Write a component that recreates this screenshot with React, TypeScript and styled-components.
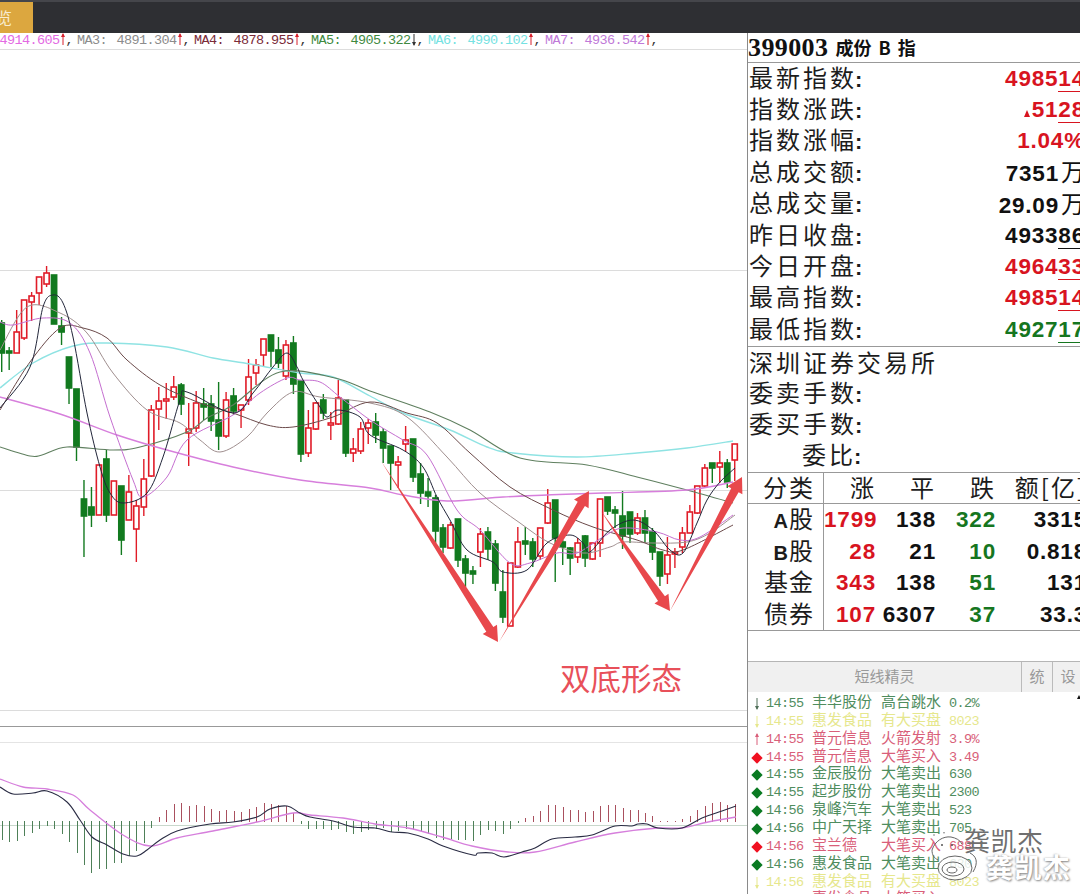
import React from "react";
import styled, { createGlobalStyle } from "styled-components";

const GlobalStyle = createGlobalStyle`
    html, body {
        margin: 0;
        padding: 0;
        background: #fff;
    }
`;

const CJK = `"Noto Sans CJK SC", sans-serif`;
const NUM = `"Liberation Sans", "Noto Sans CJK SC", sans-serif`;
const MONO = `"Liberation Mono", monospace`;

const Page = styled.div`
    width: 1080px;
    height: 894px;
    overflow: hidden;
    position: relative;
    display: flex;
    flex-direction: column;
    background: #fff;
`;

const TopBar = styled.header`
    height: 33px;
    flex: none;
    box-sizing: border-box;
    background: #2e2f33;
    border-top: 2px solid #45464b;
`;

const TabButton = styled.div`
    width: 33px;
    height: 31px;
    overflow: hidden;
    background: #dca73f;
    color: #f8ecd0;
    font: 16px/31px ${CJK};
    text-indent: -4px;
`;

const Body = styled.div`
    flex: 1;
    display: flex;
    min-height: 0;
`;

const LeftPane = styled.main`
    width: 747px;
    flex: none;
    display: flex;
    flex-direction: column;
    overflow: hidden;
`;

const Legend = styled.div`
    height: 16px;
    flex: none;
    margin-left: -40px;
    border-bottom: 1px solid #ddd;
    display: grid;
    grid-template-columns: repeat(6, 117px);
    font: 13.5px/16px ${MONO};
    letter-spacing: -0.6px;
    white-space: pre;
`;

const LegendItem = styled.span<{ $color: string }>`
    color: ${(p) => p.$color};
`;

const LegendValue = styled.span`
    margin-left: 2px;
`;

const Comma = styled.span`
    color: #333;
`;

const ChartArea = styled.div`
    position: relative;
    height: 660px;
    flex: none;
`;

const ChartSvg = styled.svg`
    display: block;
    width: 747px;
    height: 100%;
`;

const Annotation = styled.span`
    position: absolute;
    left: 560px;
    top: 607px;
    font: 30.5px/40px ${CJK};
    color: #e8505a;
`;

const Rule = styled.div<{ $color: string; $gap: number }>`
    flex: none;
    height: 1px;
    margin-top: ${(p) => p.$gap}px;
    background: ${(p) => p.$color};
`;

const MacdSvg = styled.svg`
    display: block;
    width: 747px;
    flex: 1;
    min-height: 0;
`;

const RightPane = styled.aside`
    flex: 1;
    min-width: 0;
    border-left: 1px solid #8a8a8a;
    overflow: hidden;
    display: flex;
    flex-direction: column;
`;

const Inner = styled.div`
    width: 338px;
    flex: 1;
    display: flex;
    flex-direction: column;
`;

const TitleRow = styled.div`
    height: 29px;
    flex: none;
    display: flex;
    align-items: center;
    gap: 7px;
    border-bottom: 1px solid #999;
    color: #111;
`;

const Code = styled.span`
    font: bold 26px/29px "Liberation Serif", serif;
    letter-spacing: 0.4px;
`;

const CodeName = styled.span`
    font: bold 18px/29px ${CJK};
    word-spacing: 3px;
    white-space: pre;
`;

const Block = styled.section<{ $line?: boolean }>`
    flex: none;
    border-bottom: ${(p) => (p.$line ? "1px solid #999" : "none")};
`;

const Row = styled.div`
    height: 31.4px;
    display: flex;
    justify-content: space-between;
    align-items: center;
    padding-right: 1px;
`;

const Label = styled.span<{ $indent?: number }>`
    font: 24px/28px ${CJK};
    letter-spacing: 3px;
    color: #1c1c1c;
    margin-left: ${(p) => p.$indent ?? 1}px;
    padding-bottom: 1px;
    white-space: nowrap;
`;

const Colon = styled.span`
    font: bold 22px/28px ${NUM};
    margin-left: -2px;
`;

const toneColor = { up: "#d8141f", down: "#16761f", flat: "#111" };

type Tone = keyof typeof toneColor;

const Value = styled.span<{ $tone: Tone }>`
    font: bold 22.5px/29px ${NUM};
    letter-spacing: 0.8px;
    padding-bottom: 1px;
    color: ${(p) => toneColor[p.$tone]};
    white-space: nowrap;
`;

const Decimal = styled.span`
    border-bottom: 1px solid currentColor;
`;

const Unit = styled.span`
    font: 24px/29px ${CJK};
    letter-spacing: 0;
    margin-left: 2px;
`;

const UpMark = styled.span`
    display: inline-block;
    width: 0;
    height: 0;
    margin-right: 2px;
    border-left: 3px solid transparent;
    border-right: 3px solid transparent;
    border-bottom: 7px solid #d8141f;
`;

const Table = styled.div`
    flex: none;
    border-bottom: 1px solid #999;
    display: grid;
    grid-template-columns: 76px 52px 60px 60px 91px;
    grid-auto-rows: 31.4px;
`;

const HeadCell = styled.div<{ $first?: boolean }>`
    font: 24px/28px ${CJK};
    color: #1c1c1c;
    text-align: right;
    white-space: nowrap;
    border-bottom: 1px solid #999;
    box-sizing: border-box;
    letter-spacing: 2px;
    padding-right: ${(p) => (p.$first ? 8 : 0)}px;
    border-right: ${(p) => (p.$first ? "1px solid #999" : "none")};
`;

const NameCell = styled.div`
    font: 24px/28px ${CJK};
    color: #1c1c1c;
    text-align: right;
    padding-right: 9px;
    border-right: 1px solid #999;
    box-sizing: border-box;
    letter-spacing: 1px;
`;

const Latin = styled.span`
    font: bold 20px/28px ${NUM};
`;

const Cell = styled.div<{ $tone: Tone }>`
    font: bold 22.5px/31px ${NUM};
    letter-spacing: 0.8px;
    text-align: right;
    color: ${(p) => toneColor[p.$tone]};
    white-space: nowrap;
`;

const SpiritHeader = styled.div`
    flex: none;
    margin-top: 30px;
    height: 30px;
    display: flex;
    background: #f0f0f0;
    border-top: 1px solid #b5b5b5;
    color: #999;
    font: 15px/28px ${CJK};
`;

const SpiritTitle = styled.div`
    width: 273px;
    text-align: center;
`;

const SpiritTab = styled.div`
    width: 31px;
    text-align: center;
    border-left: 1px solid #bbb;
    box-sizing: border-box;
`;

const FeedList = styled.ul`
    position: relative;
    margin: -3px 0 0;
    padding: 0;
    list-style: none;
`;

const signalColor = { green: "#4f8d5e", red: "#d95f7a", yellow: "#e6e78d" };

type Signal = keyof typeof signalColor;

const FeedRow = styled.li<{ $signal: Signal }>`
    height: 17.87px;
    display: grid;
    grid-template-columns: 18px 46px 69px 68px auto;
    align-items: center;
    color: ${(p) => signalColor[p.$signal]};
    font: 15px/17.87px ${CJK};
    white-space: pre;
`;

const IconSlot = styled.span`
    display: flex;
    justify-content: center;
    align-items: center;
    margin-top: 6px;
`;

const Diamond = styled.span<{ $color: string }>`
    width: 8px;
    height: 8px;
    transform: rotate(45deg);
    background: ${(p) => p.$color};
`;

const Mono = styled.span`
    font: 13.5px/17.87px ${MONO};
    letter-spacing: -0.6px;
    margin-top: 6px;
`;

const ScrollArrow = styled.span`
    position: absolute;
    left: 329px;
    top: 6px;
    width: 0;
    height: 0;
    border-left: 2px solid transparent;
    border-right: 2px solid transparent;
    border-bottom: 4px solid #111;
`;

const WatermarkName = styled.span`
    position: absolute;
    left: 964px;
    top: 824px;
    font: 26px/32px ${CJK};
    letter-spacing: 0.5px;
    color: #6f6f6f;
`;

const WatermarkNameLight = styled.span`
    position: absolute;
    left: 986px;
    top: 849px;
    font: bold 27px/36px ${CJK};
    letter-spacing: 1.5px;
    color: #fff;
    text-shadow: 1px 1px 2px #8a8a8a, -1px 0 2px #bbb;
`;

const WatermarkLogo = styled.svg`
    position: absolute;
    left: 925px;
    top: 832px;
    width: 56px;
    height: 52px;
`;

type Candle = [number, number, number, number, "r" | "g"];

// high, body top, body bottom, low
const CANDLES: Candle[] = [
    [320, 323, 353, 372, "g"], [347, 351, 353, 370, "g"], [310, 332, 353, 353, "r"], [300, 300, 338, 340, "r"],
    [292, 296, 302, 321, "r"], [277, 277, 293, 305, "r"], [266, 273, 284, 287, "r"], [275, 275, 324, 324, "g"],
    [317, 326, 332, 345, "g"], [357, 357, 388, 404, "g"], [389, 389, 447, 461, "g"], [480, 499, 516, 557, "g"],
    [487, 507, 515, 527, "g"], [465, 465, 515, 515, "r"], [450, 459, 515, 522, "g"], [481, 481, 515, 515, "r"],
    [486, 486, 540, 555, "g"], [475, 492, 520, 520, "r"], [500, 506, 529, 562, "r"], [459, 479, 507, 516, "r"],
    [405, 410, 476, 477, "r"], [387, 401, 409, 430, "r"], [383, 399, 401, 419, "r"], [376, 387, 397, 400, "r"],
    [383, 385, 404, 415, "g"], [403, 429, 433, 466, "r"], [391, 403, 428, 432, "r"], [388, 404, 407, 420, "g"],
    [395, 404, 421, 431, "g"], [382, 420, 436, 450, "g"], [392, 400, 436, 438, "r"], [388, 396, 411, 415, "g"],
    [405, 405, 410, 428, "r"], [359, 377, 400, 405, "r"], [359, 365, 373, 385, "r"], [339, 339, 355, 367, "r"],
    [335, 335, 351, 367, "g"], [337, 350, 363, 368, "g"], [340, 345, 376, 380, "r"], [336, 343, 384, 394, "g"],
    [381, 381, 454, 462, "g"], [410, 428, 453, 457, "r"], [402, 403, 429, 430, "r"], [394, 400, 413, 419, "g"],
    [412, 423, 425, 440, "r"], [380, 398, 424, 425, "r"], [400, 400, 453, 457, "g"], [438, 449, 453, 462, "r"],
    [422, 429, 451, 454, "r"], [419, 423, 428, 444, "r"], [413, 422, 435, 443, "g"], [428, 432, 448, 463, "g"],
    [446, 446, 463, 490, "g"], [456, 462, 465, 488, "r"], [426, 440, 444, 452, "r"], [439, 439, 477, 482, "g"],
    [463, 474, 493, 504, "g"], [478, 492, 496, 507, "g"], [495, 498, 531, 543, "g"], [524, 528, 547, 553, "g"],
    [522, 525, 548, 549, "r"], [519, 519, 560, 567, "g"], [555, 559, 573, 587, "g"], [566, 571, 574, 584, "g"],
    [528, 534, 552, 567, "r"], [527, 532, 549, 560, "g"], [540, 544, 583, 591, "g"], [570, 592, 617, 623, "g"],
    [563, 563, 626, 626, "r"], [527, 542, 567, 568, "r"], [527, 541, 544, 555, "g"], [538, 542, 559, 567, "g"],
    [528, 528, 556, 560, "r"], [489, 503, 523, 524, "r"], [500, 500, 538, 582, "g"], [540, 542, 547, 565, "g"],
    [547, 548, 558, 575, "g"], [538, 543, 557, 563, "r"], [535, 536, 558, 567, "g"], [543, 543, 559, 560, "r"],
    [499, 499, 543, 557, "r"], [497, 497, 511, 515, "g"], [506, 510, 513, 528, "g"], [491, 516, 536, 549, "g"],
    [512, 512, 534, 543, "g"], [513, 518, 533, 535, "r"], [510, 518, 533, 543, "g"], [528, 532, 552, 560, "g"],
    [552, 552, 576, 586, "g"], [537, 555, 574, 584, "r"], [548, 552, 554, 568, "r"], [527, 533, 547, 553, "r"],
    [505, 512, 533, 533, "r"], [486, 486, 513, 514, "r"], [464, 468, 486, 487, "r"], [463, 463, 468, 483, "g"],
    [451, 463, 467, 483, "r"], [459, 463, 482, 488, "g"], [444, 444, 460, 481, "r"],
];

type Pt = [number, number];

const MA_LINES: { color: string; width: number; pts: Pt[] }[] = [
    {
        color: "#8fe3e3", width: 1.4,
        pts: [[0, 388], [33, 363], [73, 346], [107, 343], [167, 347], [213, 358], [250, 364], [300, 373], [333, 377], [370, 396], [403, 413], [450, 430], [487, 447], [513, 453], [577, 457], [637, 453], [687, 448], [733, 441]],
    },
    {
        color: "#5f7f5f", width: 1.1,
        pts: [[0, 447], [30, 456], [42, 455], [67, 447], [113, 450], [140, 447], [187, 432], [207, 418], [233, 405], [280, 372], [335, 378], [370, 391], [430, 412], [470, 430], [520, 458], [587, 465], [637, 477], [687, 490], [733, 503]],
    },
    {
        color: "#d77fdc", width: 1.4,
        pts: [[0, 397], [60, 414], [117, 435], [167, 450], [233, 467], [300, 480], [370, 488], [403, 495], [447, 501], [503, 497], [547, 495], [603, 493], [687, 490], [733, 482]],
    },
    {
        color: "#a08f8f", width: 1,
        pts: [[0, 350], [27, 307], [60, 313], [87, 333], [113, 373], [147, 410], [180, 423], [200, 440], [220, 452], [247, 437], [267, 413], [293, 392], [320, 397], [370, 403], [407, 417], [447, 457], [480, 493], [520, 523], [550, 543], [583, 553], [610, 547], [623, 542], [653, 543], [687, 542], [710, 533], [735, 515]],
    },
    {
        color: "#6b4a4a", width: 1,
        pts: [[0, 410], [30, 362], [60, 328], [83, 328], [107, 338], [127, 360], [160, 385], [200, 403], [233, 413], [267, 425], [293, 427], [333, 417], [370, 402], [407, 413], [437, 423], [470, 453], [510, 487], [553, 510], [593, 527], [637, 540], [663, 550], [683, 550], [733, 525]],
    },
    {
        color: "#c56fd0", width: 1,
        pts: [[0, 322], [13, 325], [43, 318], [70, 323], [90, 353], [110, 417], [133, 480], [143, 497], [167, 477], [187, 440], [233, 415], [260, 393], [287, 378], [300, 380], [320, 382], [340, 397], [370, 420], [403, 440], [427, 455], [457, 510], [480, 530], [510, 563], [530, 563], [557, 553], [577, 553], [603, 537], [623, 528], [657, 532], [680, 540], [700, 537], [733, 515]],
    },
    {
        color: "#22263a", width: 1,
        pts: [[0, 408], [30, 367], [43, 307], [53, 295], [63, 303], [73, 337], [87, 413], [100, 467], [110, 493], [123, 503], [147, 493], [163, 457], [180, 400], [187, 392], [233, 413], [253, 393], [273, 367], [287, 353], [297, 367], [303, 380], [320, 407], [327, 417], [338, 410], [360, 417], [370, 435], [403, 450], [423, 467], [437, 497], [450, 520], [467, 550], [493, 562], [503, 572], [527, 570], [547, 543], [570, 535], [583, 543], [590, 552], [610, 530], [633, 520], [653, 530], [670, 550], [683, 553], [697, 523], [707, 500], [720, 482], [735, 468]],
    },
];

// signed offsets: positive hangs down (green), negative rises up (red)
const MACD_BARS = [
    19, 21, 20, 15, 12, 8, 5, 8, 13, 21, 32, 44, 52, 48, 48, 42, 42, 35, 30, 22, 7,
    -5, -12, -18, -19, -16, -17, -16, -13, -11, -12, -11, -10, -13, -15, -19, -18, -17, -16, -9,
    3, 8, 8, 8, 9, 8, 11, 13, 11, 9,
    8, 7, 11, 10, 8, 9, 11, 13, 17, 19, 18, 19, 19, 20, 14, 9, 10, 13, 8, 2,
    -4, -6, -11, -17, -17, -15, -12, -12, -10, -11, -16, -17, -17, -14, -12, -12, -9, -6, -1, -1, -1,
    -3, -6, -12, -16, -19, -20, -17, -18,
];

const DIF: Pt[] = [[0, 787], [13, 794], [33, 793], [47, 791], [67, 802], [80, 820], [92, 837], [107, 845], [123, 854], [137, 856], [147, 850], [160, 840], [177, 831], [210, 824], [233, 822], [257, 817], [270, 809], [287, 806], [300, 813], [310, 817], [333, 821], [353, 827], [375, 828], [392, 832], [408, 833], [428, 839], [443, 846], [473, 855], [478, 853], [492, 853], [504, 857], [522, 852], [535, 848], [552, 839], [575, 837], [592, 835], [615, 826], [632, 826], [638, 824], [647, 824], [658, 828], [682, 828], [702, 818], [722, 811], [736, 806]];

const DEA: Pt[] = [[0, 779], [23, 787], [47, 789], [73, 795], [90, 810], [123, 835], [150, 846], [177, 838], [213, 831], [257, 822], [293, 813], [310, 815], [343, 818], [375, 824], [408, 828], [442, 837], [472, 846], [508, 852], [535, 852], [575, 842], [615, 833], [658, 828], [682, 828], [708, 822], [736, 817]];

const candleX = (i: number) => 1.7 + i * 7.48;

const smoothPath = (pts: Pt[]) => {
    let d = `M${pts[0][0]} ${pts[0][1]}`;
    for (let i = 0; i < pts.length - 1; i++) {
        const p0 = pts[Math.max(i - 1, 0)];
        const p1 = pts[i];
        const p2 = pts[i + 1];
        const p3 = pts[Math.min(i + 2, pts.length - 1)];
        const c1x = p1[0] + (p2[0] - p0[0]) / 6;
        const c1y = p1[1] + (p2[1] - p0[1]) / 6;
        const c2x = p2[0] - (p3[0] - p1[0]) / 6;
        const c2y = p2[1] - (p3[1] - p1[1]) / 6;
        d += ` C${c1x.toFixed(1)} ${c1y.toFixed(1)} ${c2x.toFixed(1)} ${c2y.toFixed(1)} ${p2[0]} ${p2[1]}`;
    }
    return d;
};

// hand-drawn style arrow: a hairline at the tail widening towards the head
const arrowPoints = (from: Pt, to: Pt) => {
    const dx = to[0] - from[0];
    const dy = to[1] - from[1];
    const len = Math.hypot(dx, dy);
    const ux = dx / len;
    const uy = dy / len;
    const nx = -uy;
    const ny = ux;
    const bx = to[0] - ux * 15;
    const by = to[1] - uy * 15;
    const pts: Pt[] = [
        [from[0], from[1]],
        [bx + nx * 4.2, by + ny * 4.2],
        [bx + nx * 8.5, by + ny * 8.5],
        [to[0], to[1]],
        [bx - nx * 8.5, by - ny * 8.5],
        [bx - nx * 4.2, by - ny * 4.2],
    ];
    return pts.map((p) => p.join(",")).join(" ");
};

const ARROWS: [Pt, Pt][] = [
    [[381, 461], [498, 642]],
    [[499, 642], [589, 491]],
    [[601, 511], [670, 611]],
    [[670, 611], [742, 477]],
];

const Tick = ({ up, color }: { up: boolean; color: string }) => (
    <svg width="6" height="13" viewBox="0 0 6 13" style={{ verticalAlign: "-2px" }}>
        <path d="M3 1V12" stroke={color} strokeWidth="1" />
        <path d={up ? "M3 0L5 4H1Z" : "M3 13L5 9H1Z"} fill={color} />
    </svg>
);

const MA_LEGEND = [
    { name: "MA2", value: "4914.605", color: "#e36ae3", up: true },
    { name: "MA3", value: "4891.304", color: "#8c8c8c", up: true },
    { name: "MA4", value: "4878.955", color: "#7a2a38", up: true },
    { name: "MA5", value: "4905.322", color: "#3f8a3f", up: false },
    { name: "MA6", value: "4990.102", color: "#74e2e2", up: true },
    { name: "MA7", value: "4936.542", color: "#c079d8", up: true },
];

const QUOTES: { label: string; node: React.ReactNode }[] = [
    { label: "最新指数", node: <Value $tone="up">4985<Decimal>14</Decimal></Value> },
    { label: "指数涨跌", node: <Value $tone="up"><UpMark />51<Decimal>28</Decimal></Value> },
    { label: "指数涨幅", node: <Value $tone="up">1.04%</Value> },
    { label: "总成交额", node: <Value $tone="flat">7351<Unit>万</Unit></Value> },
    { label: "总成交量", node: <Value $tone="flat">29.09<Unit>万</Unit></Value> },
    { label: "昨日收盘", node: <Value $tone="flat">4933<Decimal>86</Decimal></Value> },
    { label: "今日开盘", node: <Value $tone="up">4964<Decimal>33</Decimal></Value> },
    { label: "最高指数", node: <Value $tone="up">4985<Decimal>14</Decimal></Value> },
    { label: "最低指数", node: <Value $tone="down">4927<Decimal>17</Decimal></Value> },
];

const BREADTH = [
    { name: <><Latin>A</Latin>股</>, up: "1799", flat: "138", down: "322", amount: "3315" },
    { name: <><Latin>B</Latin>股</>, up: "28", flat: "21", down: "10", amount: "0.818" },
    { name: "基金", up: "343", flat: "138", down: "51", amount: "131" },
    { name: "债券", up: "107", flat: "6307", down: "37", amount: "33.3" },
];

type Feed = { mark: "down" | "up" | "diamond"; signal: Signal; time: string; name: string; event: string; value: string };

const FEED: Feed[] = [
    { mark: "down", signal: "green", time: "14:55", name: "丰华股份", event: "高台跳水", value: "0.2%" },
    { mark: "down", signal: "yellow", time: "14:55", name: "惠发食品", event: "有大买盘", value: "8023" },
    { mark: "up", signal: "red", time: "14:55", name: "普元信息", event: "火箭发射", value: "3.9%" },
    { mark: "diamond", signal: "red", time: "14:55", name: "普元信息", event: "大笔买入", value: "3.49" },
    { mark: "diamond", signal: "green", time: "14:55", name: "金辰股份", event: "大笔卖出", value: "630" },
    { mark: "diamond", signal: "green", time: "14:55", name: "起步股份", event: "大笔卖出", value: "2300" },
    { mark: "diamond", signal: "green", time: "14:56", name: "泉峰汽车", event: "大笔卖出", value: "523" },
    { mark: "diamond", signal: "green", time: "14:56", name: "中广天择", event: "大笔卖出", value: "705" },
    { mark: "diamond", signal: "red", time: "14:56", name: "宝兰德", event: "大笔买入", value: "688" },
    { mark: "diamond", signal: "green", time: "14:56", name: "惠发食品", event: "大笔卖出", value: "630" },
    { mark: "down", signal: "yellow", time: "14:56", name: "惠发食品", event: "有大买盘", value: "8023" },
    { mark: "up", signal: "red", time: "14:57", name: "惠发食品", event: "大笔买入", value: "463" },
];

const markColor = { green: "#0a7a22", red: "#f01020", yellow: "#e6e78d" };

const PriceChart = () => (
    <ChartSvg viewBox="0 50 747 660" preserveAspectRatio="none">
        <line x1="0" x2="747" y1="270.5" y2="270.5" stroke="#dcdcdc" />
        <line x1="0" x2="747" y1="490.5" y2="490.5" stroke="#dcdcdc" />
        {CANDLES.map(([high, top, bottom, low, kind], i) => {
            const x = candleX(i);
            const color = kind === "r" ? "#e01c28" : "#127a1f";
            return (
                <g key={i}>
                    <line x1={x} x2={x} y1={high} y2={low} stroke={color} strokeWidth="1.4" />
                    <rect
                        x={x - 2.6}
                        y={top}
                        width="5.2"
                        height={Math.max(bottom - top, 1.5)}
                        fill={kind === "r" ? "#fff" : color}
                        stroke={color}
                        strokeWidth="1.6"
                    />
                </g>
            );
        })}
        {MA_LINES.map((line) => (
            <path key={line.color} d={smoothPath(line.pts)} fill="none" stroke={line.color} strokeWidth={line.width} />
        ))}
        {ARROWS.map(([from, to]) => (
            <polygon key={from.join()} points={arrowPoints(from, to)} fill="#e8484c" />
        ))}
    </ChartSvg>
);

const MacdChart = () => (
    <MacdSvg viewBox="0 743 747 151" preserveAspectRatio="none">
        <line x1="0" x2="747" y1="825.5" y2="825.5" stroke="#c8d8cc" />
        {MACD_BARS.map((v, i) => {
            const x = Math.round(candleX(i)) + 0.5;
            return v > 0
                ? <line key={i} x1={x} x2={x} y1={821} y2={821 + v} stroke="#4e8058" />
                : <line key={i} x1={x} x2={x} y1={822} y2={822 + v} stroke="#a9505e" />;
        })}
        <path d={smoothPath(DEA)} fill="none" stroke="#d67fdc" strokeWidth="1.3" />
        <path d={smoothPath(DIF)} fill="none" stroke="#2a2c44" strokeWidth="1.1" />
    </MacdSvg>
);

const App = () => (
    <Page>
        <GlobalStyle />
        <TopBar>
            <TabButton>览</TabButton>
        </TopBar>
        <Body>
            <LeftPane>
                <Legend>
                    {MA_LEGEND.map((ma) => (
                        <LegendItem key={ma.name} $color={ma.color}>
                            {ma.name}: <LegendValue>{ma.value}</LegendValue>
                            <Tick up={ma.up} color={ma.up ? "#d8202c" : "#333"} />
                            <Comma>,</Comma>
                        </LegendItem>
                    ))}
                </Legend>
                <ChartArea>
                    <PriceChart />
                    <Annotation>双底形态</Annotation>
                </ChartArea>
                <Rule $color="#dcdcdc" $gap={0} />
                <Rule $color="#999" $gap={15} />
                <Rule $color="#e4e4e4" $gap={15} />
                <MacdChart />
            </LeftPane>
            <RightPane>
                <Inner>
                    <TitleRow>
                        <Code>399003</Code>
                        <CodeName>成份 B 指</CodeName>
                    </TitleRow>
                    <Block $line>
                        {QUOTES.map((q) => (
                            <Row key={q.label}>
                                <Label>{q.label}<Colon>:</Colon></Label>
                                {q.node}
                            </Row>
                        ))}
                    </Block>
                    <Block $line>
                        <Row><Label>深圳证券交易所</Label></Row>
                        <Row><Label>委卖手数<Colon>:</Colon></Label></Row>
                        <Row><Label>委买手数<Colon>:</Colon></Label></Row>
                        <Row><Label $indent={54}>委比<Colon>:</Colon></Label></Row>
                    </Block>
                    <Table>
                        <HeadCell $first>分类</HeadCell>
                        <HeadCell>涨</HeadCell>
                        <HeadCell>平</HeadCell>
                        <HeadCell>跌</HeadCell>
                        <HeadCell>额[亿]</HeadCell>
                        {BREADTH.map((b) => (
                            <React.Fragment key={b.up}>
                                <NameCell>{b.name}</NameCell>
                                <Cell $tone="up">{b.up}</Cell>
                                <Cell $tone="flat">{b.flat}</Cell>
                                <Cell $tone="down">{b.down}</Cell>
                                <Cell $tone="flat">{b.amount}</Cell>
                            </React.Fragment>
                        ))}
                    </Table>
                    <SpiritHeader>
                        <SpiritTitle>短线精灵</SpiritTitle>
                        <SpiritTab>统</SpiritTab>
                        <SpiritTab>设</SpiritTab>
                    </SpiritHeader>
                    <FeedList>
                        <ScrollArrow />
                        {FEED.map((f, i) => (
                            <FeedRow key={i} $signal={f.signal}>
                                <IconSlot>
                                    {f.mark === "diamond"
                                        ? <Diamond $color={markColor[f.signal]} />
                                        : <Tick up={f.mark === "up"} color={f.signal === "yellow" ? "#e6e78d" : f.mark === "up" ? "#d95f7a" : "#4f6f58"} />}
                                </IconSlot>
                                <Mono>{f.time}</Mono>
                                <span>{f.name}</span>
                                <span>{f.event}</span>
                                <Mono>{f.value}</Mono>
                            </FeedRow>
                        ))}
                    </FeedList>
                </Inner>
            </RightPane>
        </Body>
        <WatermarkLogo viewBox="0 0 56 52">
            <g fill="none" stroke="#666" strokeWidth="1">
                <path d="M7 18C10 9 18 4 26 5C31 6 35 8 37 12" />
                <path d="M7 18C7 23 9 26 13 28" />
                <path d="M45 21C51 24 54 30 48 40" />
                <ellipse cx="30" cy="36" rx="17" ry="12" fill="#fff" fillOpacity="0.85" />
                <ellipse cx="28" cy="37" rx="11" ry="7" />
                <ellipse cx="27" cy="38" rx="5" ry="3" />
            </g>
            <circle cx="17" cy="13" r="1" fill="#555" />
            <circle cx="27" cy="13" r="1" fill="#555" />
            <circle cx="9" cy="3" r="0.8" fill="#777" />
            <circle cx="19" cy="0.8" r="0.8" fill="#777" />
        </WatermarkLogo>
        <WatermarkName>龚凯杰</WatermarkName>
        <WatermarkNameLight>龚凯杰</WatermarkNameLight>
    </Page>
);

export default App;
